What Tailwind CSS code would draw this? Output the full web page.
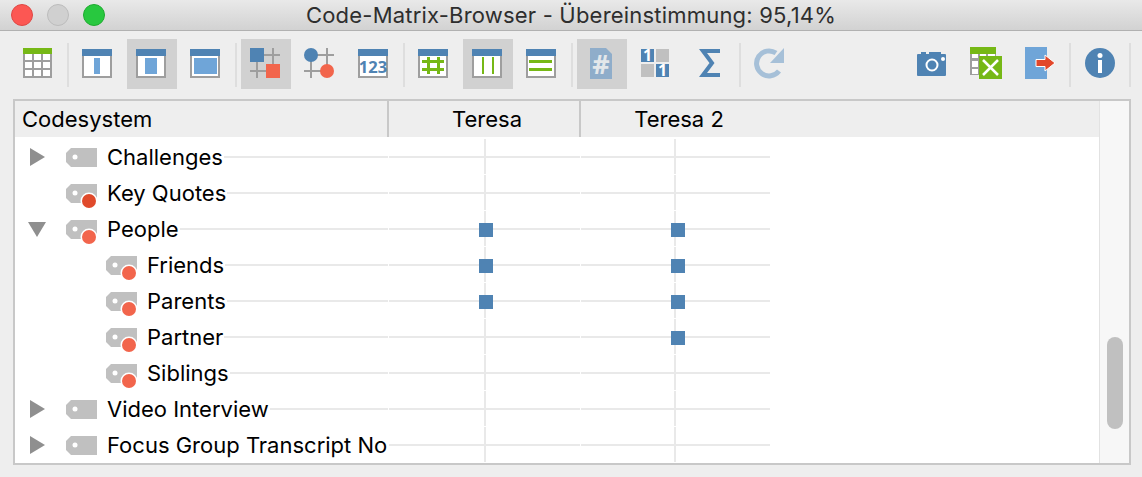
<!DOCTYPE html>
<html lang="de">
<head>
<meta charset="UTF-8">
<title>Code-Matrix-Browser</title>
<script src="https://cdn.jsdelivr.net/npm/@tailwindcss/browser@4"></script>
</head>
<body class="w-[1142px] h-[477px] overflow-hidden bg-[#eeeeee] font-['Inter',sans-serif]">
  <!-- title bar -->
  <div class="relative h-[31px] flex items-center justify-center bg-gradient-to-b from-[#e9e9e9] to-[#d2d2d2] border-b border-[#b1b1b1]">
    <div class="absolute left-[11px] top-[4px] flex gap-[14px]">
      <span class="w-[22px] h-[22px] rounded-full bg-[#fc5753] border border-[#df4744]"></span>
      <span class="w-[22px] h-[22px] rounded-full bg-[#d0d0d0] border border-[#bcbcbc]"></span>
      <span class="w-[22px] h-[22px] rounded-full bg-[#28c83f] border border-[#1eab2f]"></span>
    </div>
    <span class="text-[22px] tracking-[0.2px] leading-[30px] text-[#2e2e2e]">Code-Matrix-Browser - Übereinstimmung: 95,14%</span>
  </div>

  <!-- toolbar -->
  <div class="h-[68px] flex items-start pt-[8px] pl-[13px] pr-[11px] gap-1">
    <div class="w-[50px] h-[50px]">
      <svg width="50" height="50" viewBox="0 0 50 50"><rect x="10" y="9" width="29" height="30" fill="#9e9e9e"/><rect x="10" y="9" width="29" height="6" fill="#76b816"/><path fill="#fff" d="M12 15h7v6h-7zM21 15h7v6h-7zM30 15h7v6h-7zM12 23h7v6h-7zM21 23h7v6h-7zM30 23h7v6h-7zM12 31h7v6h-7zM21 31h7v6h-7zM30 31h7v6h-7z"/></svg>
    </div>
    <div class="w-[2px] h-[44px] mt-[4px] bg-[#dedede]"></div>
    <div class="w-[50px] h-[50px]">
      <svg width="50" height="50" viewBox="0 0 50 50"><rect x="9" y="10" width="30" height="29" fill="#9e9e9e"/><rect x="11" y="17" width="26" height="20" fill="#fff"/><rect x="9" y="10" width="30" height="7" fill="#4f83b3"/><rect x="21" y="19" width="6" height="16" fill="#6fa5d8"/></svg>
    </div>
    <div class="w-[50px] h-[50px] bg-[#d1d1d1]">
      <svg width="50" height="50" viewBox="0 0 50 50"><rect x="9" y="10" width="30" height="29" fill="#9e9e9e"/><rect x="11" y="17" width="26" height="20" fill="#fff"/><rect x="9" y="10" width="30" height="7" fill="#4f83b3"/><rect x="18" y="19" width="12" height="16" fill="#6fa5d8"/></svg>
    </div>
    <div class="w-[50px] h-[50px]">
      <svg width="50" height="50" viewBox="0 0 50 50"><rect x="9" y="10" width="30" height="29" fill="#9e9e9e"/><rect x="11" y="17" width="26" height="20" fill="#fff"/><rect x="9" y="10" width="30" height="7" fill="#4f83b3"/><rect x="13" y="19" width="23" height="16" fill="#6fa5d8"/></svg>
    </div>
    <div class="w-[2px] h-[44px] mt-[4px] bg-[#dedede]"></div>
    <div class="w-[50px] h-[50px] bg-[#d1d1d1]">
      <svg width="50" height="50" viewBox="0 0 50 50"><path stroke="#9e9e9e" stroke-width="2" fill="none" d="M23 16h16M32 9v20M9 32h18M16 23v16"/><rect x="9" y="9" width="14" height="14" fill="#4f83b3"/><rect x="25" y="25" width="14" height="14" fill="#f2654c"/></svg>
    </div>
    <div class="w-[50px] h-[50px]">
      <svg width="50" height="50" viewBox="0 0 50 50"><path stroke="#9e9e9e" stroke-width="2" fill="none" d="M20 16h19M32 9v20M9 32h18M16 20v19"/><circle cx="16" cy="16" r="7" fill="#4f83b3"/><circle cx="32" cy="32" r="7" fill="#f2654c"/></svg>
    </div>
    <div class="w-[50px] h-[50px]">
      <svg width="50" height="50" viewBox="0 0 50 50"><rect x="9" y="10" width="30" height="29" fill="#9e9e9e"/><rect x="11" y="17" width="26" height="20" fill="#fff"/><rect x="9" y="10" width="30" height="7" fill="#4f83b3"/><text x="24" y="34" text-anchor="middle" font-family="Open Sans" font-weight="700" font-size="16.500" fill="#4f83b3">123</text></svg>
    </div>
    <div class="w-[2px] h-[44px] mt-[4px] bg-[#dedede]"></div>
    <div class="w-[50px] h-[50px]">
      <svg width="50" height="50" viewBox="0 0 50 50"><rect x="9" y="10" width="30" height="29" fill="#9e9e9e"/><rect x="11" y="17" width="26" height="20" fill="#fff"/><rect x="9" y="10" width="30" height="7" fill="#4f83b3"/><path fill="#76b816" d="M18 18h3v17h-3zM28 18h3v17h-3zM13 21h22v3H13zM13 29h22v3H13z"/></svg>
    </div>
    <div class="w-[50px] h-[50px] bg-[#d1d1d1]">
      <svg width="50" height="50" viewBox="0 0 50 50"><rect x="9" y="10" width="30" height="29" fill="#9e9e9e"/><rect x="11" y="17" width="26" height="20" fill="#fff"/><rect x="9" y="10" width="30" height="7" fill="#4f83b3"/><path fill="#76b816" d="M19 18h2v17h-2zM29 18h2v17h-2z"/></svg>
    </div>
    <div class="w-[50px] h-[50px]">
      <svg width="50" height="50" viewBox="0 0 50 50"><rect x="9" y="10" width="30" height="29" fill="#9e9e9e"/><rect x="11" y="17" width="26" height="20" fill="#fff"/><rect x="9" y="10" width="30" height="7" fill="#4f83b3"/><path fill="#76b816" d="M12 21h23v3H12zM12 29h23v3H12z"/></svg>
    </div>
    <div class="w-[2px] h-[44px] mt-[4px] bg-[#dedede]"></div>
    <div class="w-[50px] h-[50px] bg-[#d1d1d1]">
      <svg width="50" height="50" viewBox="0 0 50 50"><path fill="#8fadca" d="M13 9h16l6 6v25H13z"/><text x="24" y="35" text-anchor="middle" font-family="Open Sans" font-weight="700" font-size="27" fill="#e3e7ea">#</text></svg>
    </div>
    <div class="w-[50px] h-[50px]">
      <svg width="50" height="50" viewBox="0 0 50 50"><rect x="10" y="10" width="13" height="13" fill="#4f83b3"/><rect x="25" y="10" width="13" height="13" fill="#c0c0c0"/><rect x="10" y="25" width="13" height="13" fill="#c0c0c0"/><rect x="25" y="25" width="13" height="13" fill="#4f83b3"/><text x="16.500" y="22" text-anchor="middle" font-family="Open Sans" font-weight="700" font-size="16" fill="#fff">1</text><text x="31.500" y="37" text-anchor="middle" font-family="Open Sans" font-weight="700" font-size="16" fill="#fff">1</text></svg>
    </div>
    <div class="w-[50px] h-[50px]">
      <svg width="50" height="50" viewBox="0 0 50 50"><path fill="none" stroke="#4f83b3" stroke-width="4" d="M35 12H18L27 24L18 36H35"/></svg>
    </div>
    <div class="w-[2px] h-[44px] mt-[4px] bg-[#dedede]"></div>
    <div class="w-[50px] h-[50px]">
      <svg width="50" height="50" viewBox="0 0 50 50"><path fill="none" stroke="#a6c0d8" stroke-width="5" d="M31 14A12.500 12.500 0 1 0 34 32"/><path fill="#a6c0d8" d="M39 9v15H25z"/></svg>
    </div>
    <div class="flex-1"></div>
    <div class="w-[50px] h-[50px]">
      <svg width="50" height="50" viewBox="0 0 50 50"><path fill="#4f83b3" d="M14 13h5v2h3v-2h12v2h4a1 1 0 0 1 1 1v20a1 1 0 0 1-1 1H11a1 1 0 0 1-1-1V16a1 1 0 0 1 1-1h3z"/><circle cx="25" cy="26" r="5.500" fill="none" stroke="#fff" stroke-width="2"/><circle cx="36" cy="20" r="2" fill="#fff"/></svg>
    </div>
    <div class="w-[50px] h-[50px]">
      <svg width="50" height="50" viewBox="0 0 50 50"><rect x="9" y="8" width="26" height="28" fill="#9e9e9e"/><rect x="9" y="8" width="26" height="7" fill="#76b816"/><path fill="#fff" d="M11 15h6v4h-6zM19 15h6v4h-6zM27 15h7v4h-7zM11 22h6v6h-6zM11 30h6v5h-6z"/><rect x="18" y="17" width="23" height="23" fill="#76b816"/><path stroke="#fff" stroke-width="2.500" d="M22 21l15 15M37 21L22 36"/></svg>
    </div>
    <div class="w-[50px] h-[50px]">
      <svg width="50" height="50" viewBox="0 0 50 50"><rect x="10" y="8" width="22" height="32" fill="#6fa5d8"/><path fill="#e2472a" stroke="#fff" stroke-width="1" d="M21 20.500h9V16l10 8-10 8v-4.500h-9z"/><path fill="#eeeeee" d="M32 10h8v5h-8zM32 33h8v7h-8z"/></svg>
    </div>
    <div class="w-[2px] h-[44px] mt-[4px] bg-[#dedede]"></div>
    <div class="w-[50px] h-[50px]">
      <svg width="50" height="50" viewBox="0 0 50 50"><circle cx="25" cy="24" r="15" fill="#4f83b3"/><circle cx="25" cy="16.500" r="2.500" fill="#fff"/><rect x="23" y="21" width="4" height="13" fill="#fff"/></svg>
    </div>
    <div class="w-[2px] h-[44px] mt-[4px] bg-[#dedede]"></div>
  </div>

  <!-- matrix -->
  <div class="ml-[13px] w-[1118px] h-[366px] border-2 border-[#c8c8c8] flex">
    <div class="w-[1084px] bg-white">
      <div class="h-[36px] flex bg-[#eeeeee] text-[22px] text-black">
        <div class="w-[374px] border-r-2 border-[#c8c8c8] pl-[7px] leading-[36px]">Codesystem</div>
        <div class="w-[192px] border-r-2 border-[#c8c8c8] pl-[6px] text-center leading-[36px]">Teresa</div>
        <div class="w-[189px] pl-[7px] text-center leading-[36px]">Teresa 2</div>
      </div>
      <div id="rows" class="pt-[2px]"></div>
    </div>
    <div class="w-[30px] bg-[#f7f7f7] border-l border-[#e2e2e2] pl-[7px] pt-[236px]">
      <div class="w-[16px] h-[92px] rounded-full bg-[#c0c0c0]"></div>
    </div>
  </div>

  <script>
    const rows = [
      { name: 'Challenges', arrow: 'right' },
      { name: 'Key Quotes', dot: '#e04a2b' },
      { name: 'People', arrow: 'down', dot: '#f2654c', a: 1, b: 1 },
      { name: 'Friends', child: true, dot: '#f2654c', a: 1, b: 1 },
      { name: 'Parents', child: true, dot: '#f2654c', a: 1, b: 1 },
      { name: 'Partner', child: true, dot: '#f2654c', b: 1 },
      { name: 'Siblings', child: true, dot: '#f2654c' },
      { name: 'Video Interview', arrow: 'right' },
      { name: 'Focus Group Transcript No', arrow: 'right' }
    ];

    function arrowIcon(dir) {
      if (dir === 'right') return '<svg width="16" height="20" viewBox="0 0 16 20" class="shrink-0"><path fill="#8f8f8f" d="M0 1l15 9-15 9z"/></svg>';
      if (dir === 'down') return '<svg width="16" height="20" viewBox="0 0 16 20" class="shrink-0 overflow-visible"><path fill="#8f8f8f" d="M-2 3h18L7 18z"/></svg>';
      return '<span class="w-[16px] shrink-0"></span>';
    }

    function tagIcon(dot) {
      return `<svg width="32" height="36" viewBox="0 0 32 36" class="shrink-0">
        <path fill="#c0c0c0" d="M5 9h26v19H5l-5-5v-9z"/>
        <circle cx="9" cy="18" r="2.500" fill="#fff"/>
        ${dot ? `<circle cx="23" cy="26" r="8.500" fill="#fff"/><circle cx="23" cy="26" r="7" fill="${dot}"/>` : ''}
      </svg>`;
    }

    function cell(widthClass, lineClass, on) {
      return `<div class="${widthClass} relative h-[36px] flex items-center">
        <div class="h-[2px] w-full bg-[#e9e9e9]"></div>
        <div class="absolute top-0 ${lineClass} w-[2px] h-[35px] bg-[#e9e9e9]"></div>
        ${on ? '<div class="absolute left-[90px] top-[12px] w-[14px] h-[14px] bg-[#4f83b3]"></div>' : ''}
      </div>`;
    }

    document.getElementById('rows').innerHTML = rows.map(r => `
      <div class="h-[36px] flex gap-px">
        <div class="w-[373px] h-[36px] flex items-center overflow-hidden ${r.child ? 'pl-[91px]' : 'pl-[15px]'}">
          ${r.child ? '' : arrowIcon(r.arrow)}
          <span class="${r.child ? '' : 'ml-[20px]'}">${tagIcon(r.dot)}</span>
          <span class="ml-[9px] pr-px whitespace-nowrap text-[22px] text-black">${r.name}</span>
          <div class="flex-1 h-[2px] bg-[#e9e9e9]"></div>
        </div>
        ${cell('w-[191px]', 'left-[95px]', r.a)}
        ${cell('w-[189px]', 'left-[93px]', r.b)}
      </div>`).join('');
  </script>
</body>
</html>
